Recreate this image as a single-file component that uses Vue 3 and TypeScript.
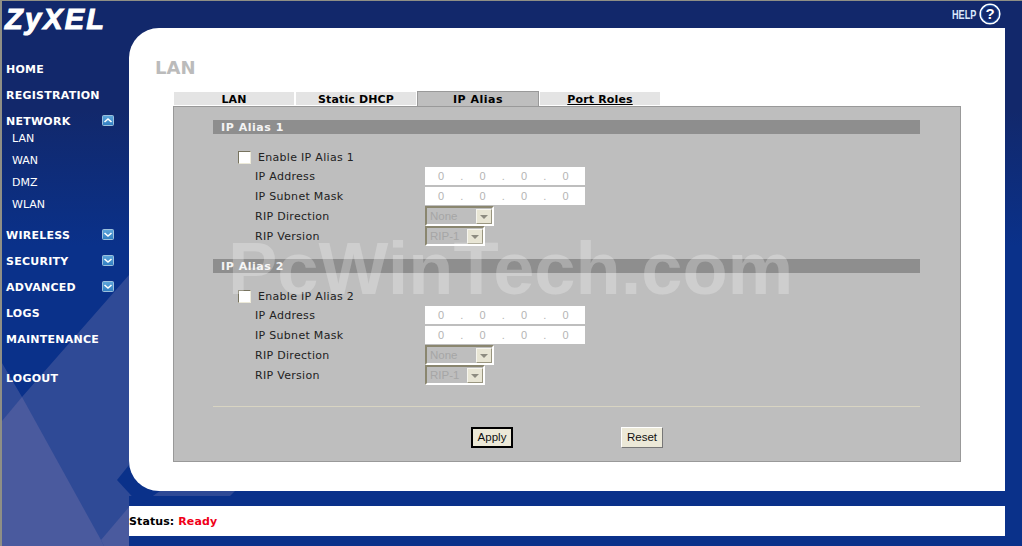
<script setup lang="ts">
interface NavItem { label: string; arrow?: 'up' | 'down'; sub?: string[]; gap?: boolean }
const nav: NavItem[] = [
  { label: 'HOME' },
  { label: 'REGISTRATION' },
  { label: 'NETWORK', arrow: 'up', sub: ['LAN', 'WAN', 'DMZ', 'WLAN'] },
  { label: 'WIRELESS', arrow: 'down' },
  { label: 'SECURITY', arrow: 'down' },
  { label: 'ADVANCED', arrow: 'down' },
  { label: 'LOGS' },
  { label: 'MAINTENANCE' },
  { label: 'LOGOUT', gap: true },
]
const tabs = ['LAN', 'Static DHCP', 'IP Alias', 'Port Roles']
const aliases = [1, 2]
</script>

<template>
  <div class="page">
    <svg class="backdrop" width="1022" height="546" viewBox="0 0 1022 546">
      <defs>
        <linearGradient id="sky" x1="0" y1="0" x2="0" y2="1">
          <stop offset="0" stop-color="#12286b" />
          <stop offset="0.2" stop-color="#12286b" />
          <stop offset="0.45" stop-color="#0a318a" />
          <stop offset="1" stop-color="#0a318a" />
        </linearGradient>
        <linearGradient id="chip" x1="0" y1="0" x2="0" y2="1">
          <stop offset="0" stop-color="#5fa8dc" />
          <stop offset="1" stop-color="#2f7cc0" />
        </linearGradient>
      </defs>
      <rect width="1022" height="546" fill="url(#sky)" />
      <polygon points="2,363 22,397 129,275 129,546 2,546" fill="#2f4a96" />
      <polygon points="22,397 101,540 104,546 2,546 2,421" fill="#4a5a9e" />
      <polygon points="101,540 129,507 129,546 104,546" fill="#4a5a9e" />
      <polygon points="129,491 235,491 230,496 129,496" fill="#2f4a96" />
      <polygon points="117,480 129,465 160,491 140,505" fill="#0a318a" />
    </svg>

    <aside class="side">
      <div class="logo">ZyXEL</div>
      <nav class="menu">
        <template v-for="item in nav" :key="item.label">
          <div class="item" :class="{ spaced: item.gap }">
            <span>{{ item.label }}</span>
            <svg v-if="item.arrow" class="toggle" width="12" height="11" viewBox="0 0 12 11">
              <rect x="0.5" y="0.5" width="11" height="10" rx="1" fill="url(#chip)" stroke="#9cc0dc" />
              <path :d="item.arrow === 'up' ? 'M2.5 7 6 4 9.5 7' : 'M2.5 4 6 7 9.5 4'" fill="none" stroke="#fff" stroke-width="1.6" />
            </svg>
          </div>
          <div v-if="item.sub" class="submenu">
            <div v-for="s in item.sub" :key="s" class="subitem">{{ s }}</div>
          </div>
        </template>
      </nav>
    </aside>

    <div class="center">
      <header class="top">
        <span class="help">HELP</span>
        <svg width="22" height="22" viewBox="0 0 22 22">
          <circle cx="11" cy="11" r="9.8" fill="#12286b" stroke="#fff" stroke-width="1.6" />
          <circle cx="11" cy="11" r="8.6" fill="none" stroke="#2f6fc0" stroke-width="0.8" />
          <text x="11" y="16" text-anchor="middle" class="qmark">?</text>
        </svg>
      </header>

      <main class="panel">
        <h1 class="title">LAN</h1>
        <div class="tabs">
          <div v-for="t in tabs" :key="t" class="tab" :class="{ active: t === 'IP Alias', link: t === 'Port Roles' }">{{ t }}</div>
        </div>
        <div class="box">
          <section v-for="n in aliases" :key="n" class="alias">
            <div class="bar">IP Alias {{ n }}</div>
            <label class="row check-row">
              <input class="check" type="checkbox" />
              <span>Enable IP Alias {{ n }}</span>
            </label>
            <div class="row field">
              <span class="lbl">IP Address</span>
              <div class="ip"><i>0</i><b>.</b><i>0</i><b>.</b><i>0</i><b>.</b><i>0</i></div>
            </div>
            <div class="row field">
              <span class="lbl">IP Subnet Mask</span>
              <div class="ip"><i>0</i><b>.</b><i>0</i><b>.</b><i>0</i><b>.</b><i>0</i></div>
            </div>
            <div class="row field">
              <span class="lbl">RIP Direction</span>
              <div class="sel wide"><span>None</span><em class="drop"></em></div>
            </div>
            <div class="row field">
              <span class="lbl">RIP Version</span>
              <div class="sel"><span>RIP-1</span><em class="drop"></em></div>
            </div>
          </section>
          <hr class="rule" />
          <div class="actions">
            <button class="btn primary" type="button">Apply</button>
            <button class="btn" type="button">Reset</button>
          </div>
        </div>
      </main>

      <footer class="status">Status:&nbsp;<span class="ready">Ready</span></footer>
    </div>

    <div class="mark">PcWinTech.com</div>
    <div class="edge"></div>
  </div>
</template>

<style>
html, body { margin: 0; overflow: hidden; }
</style>

<style scoped>
.page {
  position: relative;
  width: 1022px;
  height: 546px;
  display: flex;
  overflow: hidden;
  font-family: "DejaVu Sans", Verdana, sans-serif;
  font-size: 11px;
}
.backdrop { position: absolute; left: 0; top: 0; }
.edge {
  position: absolute;
  left: 0; top: 0; right: 0; bottom: 0;
  border-top: 1px solid #8f8f85;
  border-left: 2px solid #8f8f85;
  pointer-events: none;
}
.side { position: relative; width: 129px; flex: none; }
.logo {
  height: 56px;
  box-sizing: border-box;
  padding: 2px 0 0 5px;
  color: #fff;
  font: italic 700 29px/34px "Liberation Sans", Arial, sans-serif;
  letter-spacing: 2.2px;
  -webkit-text-stroke: 1px #fff;
}
.item {
  height: 26px;
  padding-left: 6px;
  padding-right: 15px;
  display: flex;
  align-items: center;
  justify-content: space-between;
  color: #fff;
  font-weight: 700;
  font-size: 11px;
  letter-spacing: 0.25px;
}
.item.spaced { margin-top: 13px; }
.toggle { display: block; margin-top: -1px; }
.submenu { margin: -6px 0 6px; }
.subitem { height: 22px; line-height: 22px; padding-left: 12px; color: #fff; font-size: 11px; }

.center { position: relative; width: 876px; flex: none; display: flex; flex-direction: column; }
.top { height: 28px; display: flex; align-items: flex-start; justify-content: flex-end; padding-top: 3px; box-sizing: border-box; gap: 3px; padding-right: 4px; }
.help {
  width: 24px;
  color: #dbe9fb;
  font: 700 12px/24px "Liberation Sans", Arial, sans-serif;
  white-space: nowrap;
  display: inline-block;
  transform: scaleX(0.76);
  transform-origin: left center;
}
.qmark { fill: #fff; font: 700 15px "Liberation Sans", Arial, sans-serif; }

.panel {
  height: 463px;
  box-sizing: border-box;
  background: #fff;
  border-radius: 30px 0 0 30px;
  padding: 0 0 0 44px;
}
.title {
  margin: 0 0 0 -18px;
  padding-left: 0;
  height: 63px;
  box-sizing: border-box;
  padding-top: 29px;
  color: #bbb;
  font-size: 18px;
  line-height: 22px;
  font-weight: 700;
}
.tabs { display: flex; height: 15px; align-items: flex-end; padding-left: 1px; }
.tab {
  width: 120px;
  height: 13px;
  margin: 0 2px 1px 0;
  background: #e4e4e4;
  color: #000;
  text-align: center;
  font-weight: 700;
  line-height: 15px;
  letter-spacing: 0.15px;
}
.tab.active {
  width: 120px;
  height: 14px;
  margin: 0 1px 0 -1px;
  background: #bebebe;
  border: 1px solid #999;
  border-bottom: 0;
  line-height: 15px;
  letter-spacing: 0.5px;
}
.tab.link { text-decoration: underline; margin-right: 0; }
.box {
  width: 788px;
  height: 356px;
  box-sizing: border-box;
  background: #bebebe;
  border: 1px solid #999;
  padding: 13px 40px 0 39px;
}
.alias + .alias { margin-top: 12px; }
.bar {
  height: 14px;
  background: #8e8e8e;
  color: #f4f4f4;
  font-weight: 700;
  line-height: 15px;
  padding-left: 8px;
  margin-bottom: 13px;
  letter-spacing: 0.55px;
}
.row { display: flex; align-items: center; height: 20px; color: #222; letter-spacing: 0.3px; }
.check-row { padding-left: 25px; }
.check {
  appearance: none;
  width: 13px;
  height: 13px;
  margin: 0 7px 0 0;
  background: #fff;
  border: 1px solid;
  border-color: #77735f #ece9d8 #ece9d8 #77735f;
  box-sizing: border-box;
}
.field { padding-left: 42px; align-items: flex-start; }
.lbl { width: 170px; line-height: 19px; }
.ip {
  width: 160px;
  height: 18px;
  background: #fff;
  display: flex;
  align-items: center;
  padding-left: 12px;
  box-sizing: border-box;
  color: #b4b4b4;
  font-family: "Liberation Sans", Arial, sans-serif;
  font-size: 11px;
  letter-spacing: 0;
}
.ip i { font-style: normal; width: 8px; text-align: center; }
.ip b { font-weight: 400; width: 33.5px; text-align: center; }
.sel {
  width: 60px;
  height: 20px;
  margin-top: -1px;
  box-sizing: border-box;
  border: 2px solid;
  border-color: #8a866f #fff #fff #8a866f;
  display: flex;
  justify-content: space-between;
  align-items: center;
  color: #a6a6a6;
  font-family: "Liberation Sans", Arial, sans-serif;
  font-size: 11.5px;
  padding-left: 3px;
  letter-spacing: 0;
}
.sel.wide { width: 69px; }
.drop {
  position: relative;
  width: 16px;
  height: 15px;
  background: #e8e5d4;
  border: 1px solid;
  border-color: #f6f5ee #99957f #99957f #f6f5ee;
  box-sizing: border-box;
}
.drop::after {
  content: "";
  position: absolute;
  left: 3px;
  top: 5px;
  border: 4px solid transparent;
  border-top: 4px solid #8e8c80;
  border-bottom: 0;
}
.rule {
  margin: 20px 0 20px;
  height: 1px;
  border: 0;
  background: #d8d4c2;
}
.actions { display: flex; gap: 108px; padding-left: 258px; }
.btn {
  width: 42px;
  height: 21px;
  padding: 0 0 2px;
  box-sizing: border-box;
  background: #ece9d8;
  border: 1px solid;
  border-color: #fff #777 #777 #fff;
  color: #111;
  font: 400 11.5px "Liberation Sans", Arial, sans-serif;
}
.btn.primary { border: 2px solid #000; }
.status {
  height: 30px;
  margin-top: 15px;
  background: #fff;
  color: #000;
  font-weight: 700;
  line-height: 31px;
  display: flex;
  letter-spacing: 0.1px;
}
.ready { color: #f00018; }
.mark {
  position: absolute;
  left: 228px;
  top: 230px;
  color: rgba(255, 255, 255, 0.25);
  font: 700 74px/78px "Liberation Sans", Arial, sans-serif;
  white-space: nowrap;
  pointer-events: none;
}
</style>
